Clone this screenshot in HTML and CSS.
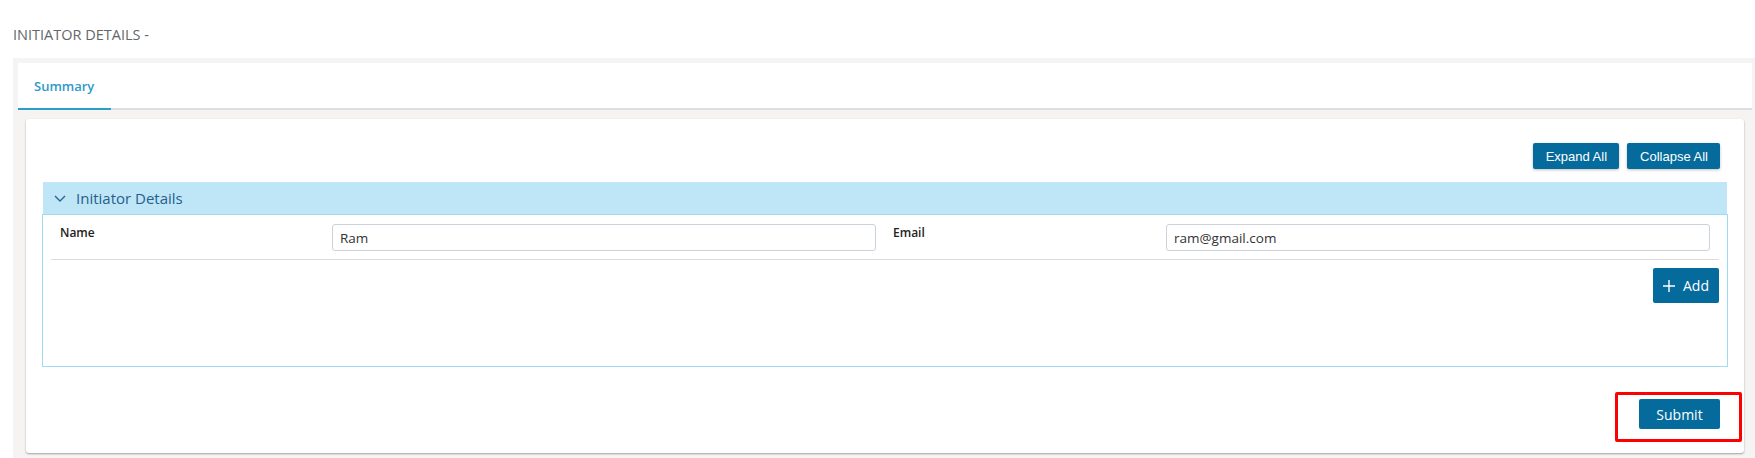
FILE: index.html
```html
<!DOCTYPE html>
<html lang="en">
<head>
<meta charset="utf-8">
<title>Initiator Details</title>
<link rel="stylesheet" href="styles.css">
</head>
<body>
  <div class="page-title">INITIATOR DETAILS -</div>
  <div class="panel">
    <div class="tabbar">
      <div class="tab active">Summary</div>
    </div>
    <div class="card">
      <div class="toolbar">
        <button class="btn-sm">Expand All</button>
        <button class="btn-sm">Collapse All</button>
      </div>
      <div class="group">
        <div class="group-header">
          <svg class="chevron" width="12" height="7" viewBox="0 0 12 7"><polyline points="1,1 6,6 11,1" fill="none" stroke="#2a6496" stroke-width="1.4"/></svg>
          <span class="group-title">Initiator Details</span>
        </div>
        <div class="group-body">
          <div class="form-row">
            <label class="field-label">Name</label>
            <input class="field-input" type="text" value="Ram">
            <label class="field-label second">Email</label>
            <input class="field-input" type="text" value="ram@gmail.com">
          </div>
          <div class="add-row">
            <button class="btn-add">
              <svg width="12" height="12" viewBox="0 0 12 12"><path d="M6 0V12M0 6H12" stroke="#fff" stroke-width="1.4"/></svg>
              <span>Add</span>
            </button>
          </div>
        </div>
      </div>
      <div class="submit-row">
        <div class="highlight">
          <button class="btn-submit">Submit</button>
        </div>
      </div>
    </div>
  </div>
</body>
</html>
```

FILE: styles.css
```css
* { box-sizing: border-box; }
html, body { margin: 0; padding: 0; }
body {
  background: #ffffff;
  font-family: "Open Sans", "Noto Sans", sans-serif;
  color: #333;
  height: 458px;
  overflow: hidden;
}
.page-title {
  padding: 25px 0 0 13px;
  height: 58px;
  font-size: 14.5px;
  line-height: 20px;
  color: #63676b;
}
.panel {
  margin-left: 13px;
  background: #f5f4f3;
  padding: 5px 3px 5px 5px;
  height: 400px;
}
.tabbar {
  background: #fff;
  height: 47px;
  border-bottom: 2px solid #dcdee3;
  display: flex;
}
.tab {
  width: 93px;
  height: 47px;
  padding: 1px 0 0 16px;
  line-height: 44px;
  font-size: 13px;
  font-weight: 600;
  color: #2e9acb;
  border-bottom: 2px solid #2aa0c9;
}
.card {
  margin: 9px 8px 0 8px;
  background: #fff;
  border-radius: 3px;
  box-shadow: 0 1px 2px rgba(0,0,0,0.35);
  padding: 24px 17px 24px 17px;
  height: 334px;
}
.toolbar {
  display: flex;
  justify-content: flex-end;
  gap: 8px;
  padding-right: 7px;
  margin-bottom: 13px;
}
.btn-sm {
  height: 26px;
  padding: 0 12px 0 13px;
  border: none;
  border-radius: 2px;
  background: #046b9c;
  color: #fff;
  font-family: "Liberation Sans", Arial, sans-serif;
  font-size: 13px;
  box-shadow: 0 1px 3px rgba(0,0,0,0.25);
}
.group-header {
  height: 32px;
  background: #bfe6f7;
  display: flex;
  align-items: center;
  padding-left: 11px;
}
.chevron { margin-right: 10px; }
.group-title {
  font-size: 15px;
  color: #255f8c;
}
.group-body {
  margin-left: -1px;
  margin-right: -1px;
  border: 1px solid #9edcf4;
  height: 153px;
}
.form-row {
  margin: 0 8px;
  padding: 9px 0 8px 9px;
  height: 45px;
  border-bottom: 1px solid #dcdcdc;
  display: grid;
  grid-template-columns: 272px 544px 290px 544px;
  align-items: start;
}
.field-label {
  font-size: 12px;
  font-weight: 600;
  line-height: 18px;
  color: #222;
}
.field-label.second { padding-left: 17px; }
.field-input {
  height: 27px;
  width: 544px;
  border: 1px solid #ccd2d9;
  border-radius: 3px;
  padding: 0 7px;
  font-family: "Open Sans", "Noto Sans", sans-serif;
  font-size: 13.5px;
  color: #333;
  outline: none;
}
.add-row {
  display: flex;
  justify-content: flex-end;
  padding: 8px 8px 0 0;
}
.btn-add {
  height: 35px;
  width: 66px;
  display: flex;
  align-items: center;
  gap: 8px;
  padding: 0 0 0 10px;
  border: none;
  border-radius: 2px;
  background: #046b9c;
  color: #fff;
  font-family: "Open Sans", "Noto Sans", sans-serif;
  font-size: 14px;
}
.submit-row {
  display: flex;
  justify-content: flex-end;
  padding: 32px 7px 0 0;
}
.highlight { position: relative; }
.highlight::after {
  content: "";
  position: absolute;
  left: -24px;
  top: -7px;
  right: -22px;
  bottom: -13px;
  border: 3px solid #ff0000;
  border-radius: 2px;
  pointer-events: none;
}
.btn-submit {
  height: 30px;
  width: 81px;
  border: none;
  border-radius: 2px;
  background: #046b9c;
  color: #fff;
  font-family: "Open Sans", "Noto Sans", sans-serif;
  font-size: 14px;
  display: block;
}
```
